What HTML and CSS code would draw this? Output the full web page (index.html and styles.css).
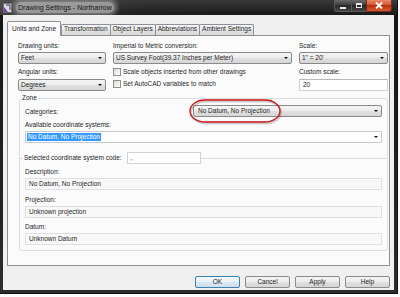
FILE: index.html
```html
<!DOCTYPE html>
<html>
<head>
<meta charset="utf-8">
<title>Drawing Settings - Northarrow</title>
<link rel="stylesheet" href="styles.css">
</head>
<body>
<div class="window">
  <div class="titlebar">
    <svg class="appicon" width="9" height="10" viewBox="0 0 9 10">
      <rect x="0.5" y="0.5" width="8" height="9" fill="#d9d9e0" stroke="#6b6b7a"/>
      <path d="M1 9 L1 4 L5 9 Z" fill="#7b3f9e"/>
      <path d="M3 2 L7 2 L7 7" fill="none" stroke="#3a3a4a" stroke-width="1"/>
    </svg>
    <span class="title">Drawing Settings - Northarrow</span>
    <div class="controls">
      <div class="ctl min"><span class="bar"></span></div>
      <div class="ctl max"><span class="sq"></span></div>
      <div class="ctl close">
        <svg width="8" height="7" viewBox="0 0 8 7"><path d="M1 0.5 L7 6.5 M7 0.5 L1 6.5" stroke="#fff" stroke-width="1.8"/></svg>
      </div>
    </div>
  </div>
  <div class="client">
    <div class="tabs">
      <div class="tab active">Units and Zone</div>
      <div class="tab">Transformation</div>
      <div class="tab">Object Layers</div>
      <div class="tab">Abbreviations</div>
      <div class="tab">Ambient Settings</div>
    </div>
    <div class="panel">
      <div class="toprow">
        <div class="col">
          <div class="lbl">Drawing units:</div>
          <div class="combo">Feet</div>
          <div class="lbl second">Angular units:</div>
          <div class="combo">Degrees</div>
        </div>
        <div class="col">
          <div class="lbl">Imperial to Metric conversion:</div>
          <div class="combo">US Survey Foot(39.37 Inches per Meter)</div>
          <div class="check first"><span class="box"></span>Scale objects inserted from other drawings</div>
          <div class="check"><span class="box"></span>Set AutoCAD variables to match</div>
        </div>
        <div class="col">
          <div class="lbl">Scale:</div>
          <div class="combo">1" = 20'</div>
          <div class="lbl second">Custom scale:</div>
          <div class="input">20</div>
        </div>
      </div>
      <fieldset class="zone">
        <legend>Zone</legend>
        <div class="catrow">
          <span>Categories:</span>
          <div class="combo cat">No Datum, No Projection</div>
        </div>
        <div class="lbl avail">Available coordinate systems:</div>
        <div class="combo white"><span class="sel">No Datum, No Projection</span></div>
        <div class="coderow">
          <span class="line short"></span>
          <span class="codelbl">Selected coordinate system code:</span>
          <div class="input code">,</div>
          <span class="line"></span>
        </div>
        <div class="lbl desc">Description:</div>
        <div class="ro">No Datum, No Projection</div>
        <div class="lbl proj">Projection:</div>
        <div class="ro">Unknown projection</div>
        <div class="lbl datum">Datum:</div>
        <div class="ro">Unknown Datum</div>
      </fieldset>
    </div>
    <div class="buttons">
      <div class="btn ok">OK</div>
      <div class="btn">Cancel</div>
      <div class="btn">Apply</div>
      <div class="btn">Help</div>
    </div>
  </div>
</div>
<svg class="ring" width="96" height="28" viewBox="0 0 96 28">
  <rect x="2" y="2.5" width="90" height="22" rx="15" ry="11" fill="none" stroke="rgba(0,0,0,0.18)" stroke-width="2"/>
  <rect x="1" y="1" width="90" height="22" rx="15" ry="11" fill="none" stroke="#cc1111" stroke-width="1.3"/>
</svg>
</body>
</html>
```
FILE: styles.css
```css
* { box-sizing: border-box; }
html, body { margin: 0; padding: 0; }
body {
  width: 400px;
  height: 297px;
  background: #fbfbfb;
  font-family: "Liberation Sans", Arial, sans-serif;
  font-size: 6.5px;
  color: #1e1e1e;
  overflow: hidden;
  position: relative;
}
.window {
  width: 398px;
  height: 294px;
  background: linear-gradient(#3a3a3a, #161616 16px, #222 60%, #2c2c2c);
  padding: 0 3px 3px 3px;
  display: flex;
  flex-direction: column;
  border-right: 1px solid #111;
  border-bottom: 1px solid #111;
}
.titlebar {
  height: 15px;
  display: flex;
  align-items: center;
  flex-shrink: 0;
  background: linear-gradient(90deg, rgba(100,100,100,0.5), rgba(50,50,50,0.15) 35%, rgba(0,0,0,0) 60%);
  margin: 0 -3px;
  padding: 0 3px;
}
.appicon { flex-shrink: 0; margin-top: 1px; }
.title {
  margin-left: 4px;
  padding: 1px 2px;
  font-size: 7px;
  line-height: 9px;
  color: #141414;
  background: rgba(178,178,178,0.8);
  box-shadow: 0 0 4px 3px rgba(170,170,170,0.6);
  border-radius: 5px;
  white-space: nowrap;
}
.controls {
  margin-left: auto;
  margin-right: 2px;
  align-self: flex-start;
  display: flex;
  height: 12px;
}
.ctl {
  height: 12px;
  border: 1px solid #5a5a5a;
  border-top: none;
  display: flex;
  align-items: center;
  justify-content: center;
  background: linear-gradient(#6a6a6a, #3a3a3a 50%, #2a2a2a 50%, #444);
}
.min { width: 17px; border-radius: 0 0 0 3px; border-right: none; }
.max { width: 15px; border-right: none; }
.close {
  width: 26px;
  border-radius: 0 0 3px 0;
  border-color: #7a2a1a;
  background: linear-gradient(#e8886a, #d2512e 50%, #b9300f 50%, #d45a33);
}
.bar { width: 6px; height: 2px; background: #e8e8e8; margin-top: 4px; }
.sq { width: 6px; height: 5px; border: 1px solid #e8e8e8; border-top-width: 2px; }
.client {
  flex: 1;
  background: #f0f0f0;
  padding: 6px 4px 0 4px;
  display: flex;
  flex-direction: column;
}
.tabs {
  display: flex;
  align-items: flex-end;
  height: 14px;
  position: relative;
  z-index: 1;
  flex-shrink: 0;
}
.tab {
  height: 11px;
  line-height: 8px;
  padding: 0 2px;
  border: 1px solid #8e9199;
  border-bottom: none;
  border-radius: 2px 2px 0 0;
  background: linear-gradient(#f6f6f6, #ececec 50%, #e2e2e2 50%, #dadada);
  white-space: nowrap;
  margin-left: -1px;
}
.tab.active {
  height: 15px;
  line-height: 13px;
  padding: 0 4px;
  margin-left: 0;
  margin-right: 1px;
  margin-bottom: -1px;
  background: #fbfbfb;
  position: relative;
  z-index: 2;
}
.panel {
  height: 231px;
  border: 1px solid #8e9199;
  background: #fbfbfb;
  padding: 6px 2px 0 10px;
  flex-shrink: 0;
}
.toprow {
  display: grid;
  grid-template-columns: 88px 179px 89px;
  column-gap: 7px;
}
.col { display: flex; flex-direction: column; }
.lbl { height: 8px; line-height: 8px; white-space: nowrap; margin-bottom: 2px; }
.lbl.second { margin-top: 4px; margin-bottom: 3px; }
.combo {
  height: 12px;
  line-height: 10px;
  border: 1px solid #8a8a8a;
  border-radius: 2px;
  background: linear-gradient(#f4f4f4, #ececec 50%, #e0e0e0 50%, #d6d6d6);
  padding-left: 2px;
  position: relative;
  white-space: nowrap;
  overflow: hidden;
}
.combo::after {
  content: "";
  position: absolute;
  right: 3px;
  top: 4px;
  border-left: 2px solid transparent;
  border-right: 2px solid transparent;
  border-top: 2px solid #111;
}
.combo.white {
  background: #fff;
  border-color: #c5c8cd;
  border-radius: 1px;
  margin-top: 2px;
  padding-left: 1px;
  line-height: 10px;
}
.sel {
  background: #3399ff;
  color: #fff;
  padding: 0 1px;
  display: inline-block;
  line-height: 8px;
  vertical-align: top;
  margin-top: 1px;
}
.input {
  height: 12px;
  line-height: 10px;
  border: 1px solid #cfd2d6;
  border-top-color: #b5b8bd;
  background: #fff;
  padding-left: 3px;
  white-space: nowrap;
}
.check {
  display: flex;
  align-items: center;
  gap: 2px;
  height: 8px;
  line-height: 8px;
  white-space: nowrap;
  margin-top: 4px;
}
.box {
  width: 8px;
  height: 8px;
  border: 1px solid #8e8f8f;
  background: linear-gradient(135deg, #d8d8d8, #f4f4f4 70%, #fff);
  flex-shrink: 0;
}
.zone {
  margin: 3px 0 0 1px;
  width: 369px;
  border: 1px solid #d5dfe5;
  border-radius: 3px;
  padding: 0 5px 5px 5px;
  min-width: 0;
}
.zone legend {
  padding: 0 1px;
  margin-left: -4px;
  line-height: 8px;
  height: 8px;
}
.catrow {
  margin-top: 3px;
  display: flex;
  align-items: center;
  justify-content: space-between;
}
.catrow span { line-height: 8px; margin-top: 1px; }
.combo.cat { width: 189px; padding-left: 4px; }
.lbl.avail { margin-top: 4px; margin-bottom: 0; }
.coderow {
  margin: 9px -6px 0 -6px;
  display: flex;
  align-items: center;
  height: 12px;
}
.line { flex: 1; height: 1px; background: #d5dfe5; }
.line.short { flex: 0 0 4px; }
.codelbl { padding: 0 1px; white-space: nowrap; line-height: 8px; margin-right: 4px; }
.input.code { width: 74px; flex-shrink: 0; border-color: #d0d3d8; }
.lbl.desc { margin-top: 4px; }
.lbl.proj { margin-top: 6px; }
.lbl.datum { margin-top: 5px; }
.ro {
  height: 12px;
  line-height: 10px;
  border: 1px solid #dde0e4;
  background: #f8f8f8;
  padding-left: 3px;
  white-space: nowrap;
}
.buttons {
  display: flex;
  justify-content: flex-end;
  gap: 5px;
  margin-top: 10px;
}
.btn {
  width: 45px;
  height: 12px;
  line-height: 10px;
  text-align: center;
  border: 1px solid #8a8a8a;
  border-radius: 2px;
  background: linear-gradient(#f4f4f4, #ececec 50%, #e0e0e0 50%, #d6d6d6);
}
.btn.ok {
  border-color: #3c7fb1;
  background: linear-gradient(#f4f9fc, #e9f1f7 50%, #d9e7f1 50%, #cfdfec);
}
.ring {
  position: absolute;
  left: 189px;
  top: 99px;
}
```
